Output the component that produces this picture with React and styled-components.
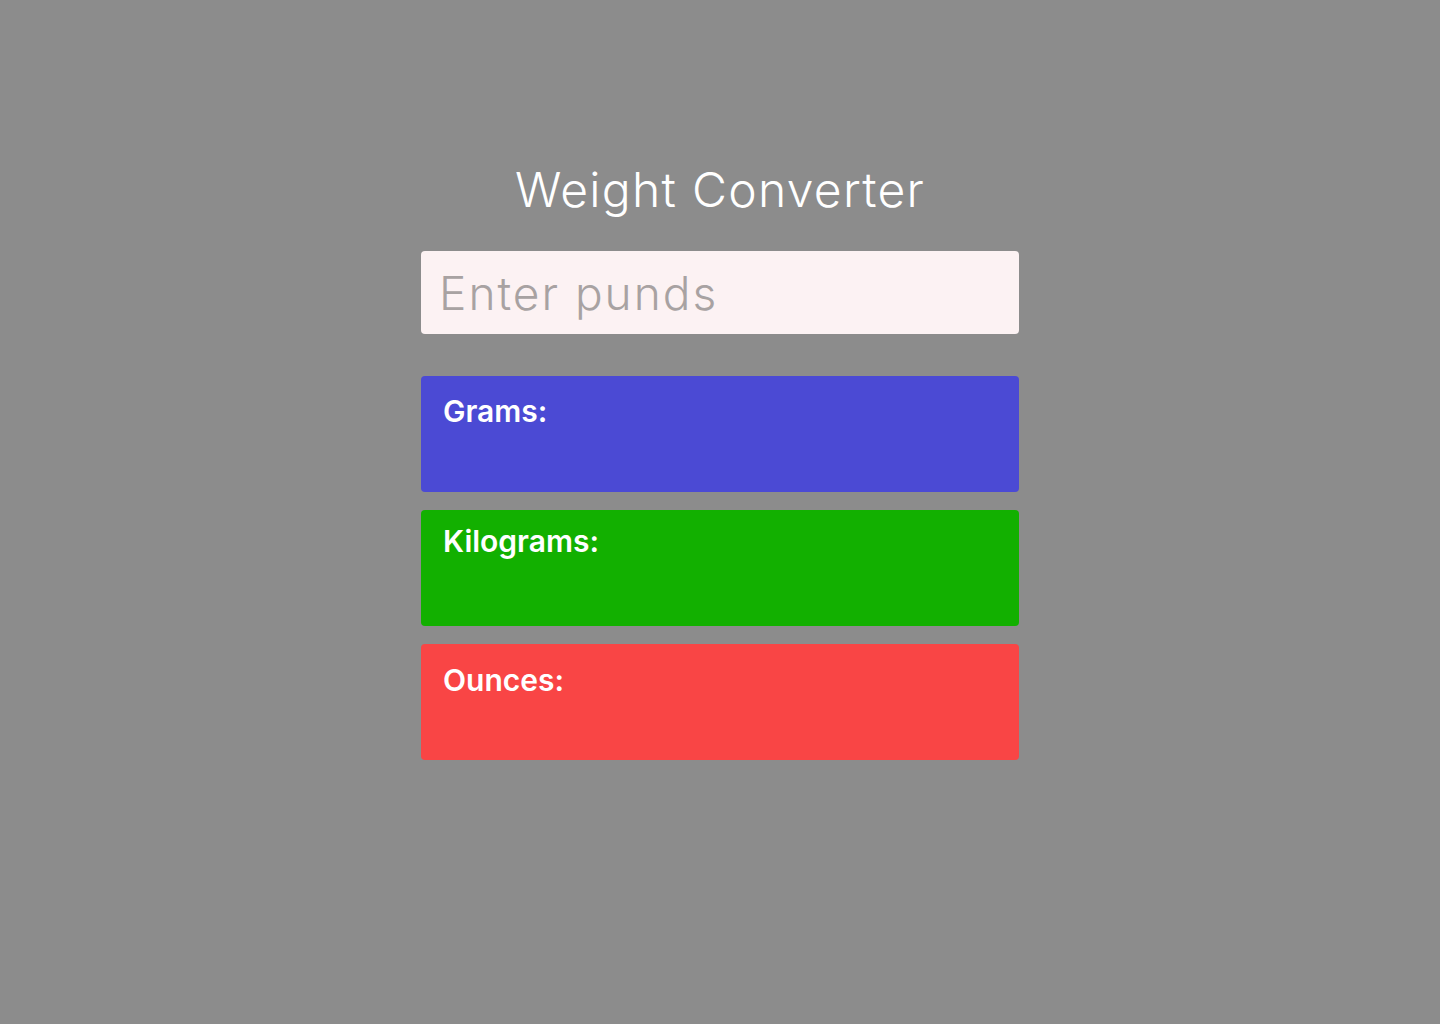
import React, { useState } from 'react'
import styled, { createGlobalStyle } from 'styled-components'

const GlobalStyle = createGlobalStyle`
  html, body {
    margin: 0;
    padding: 0;
    background: #8c8c8c;
    font-family: Inter, 'Noto Sans', sans-serif;
  }
`

const Page = styled.div`
  min-height: 1024px;
  display: flex;
  justify-content: center;
`

const Wrapper = styled.div`
  width: 598px;
  padding-top: 161px;
  display: flex;
  flex-direction: column;
  align-items: stretch;
`

const Title = styled.h1`
  margin: 0 0 32px;
  font-size: 48px;
  font-weight: 300;
  line-height: 58px;
  letter-spacing: 1.3px;
  color: #ffffff;
  text-align: center;
`

const Input = styled.input`
  box-sizing: border-box;
  width: 100%;
  height: 83px;
  margin-bottom: 42px;
  padding: 0 18px;
  border: none;
  border-radius: 4px;
  background: #fcf2f3;
  font-family: Inter, sans-serif;
  font-size: 46px;
  font-weight: 300;
  letter-spacing: 2px;
  color: #555;
  outline: none;

  &::placeholder {
    color: #a8a2a2;
  }
`

const Cards = styled.div`
  display: flex;
  flex-direction: column;
  gap: 18px;
`

const Card = styled.div`
  box-sizing: border-box;
  height: 116px;
  padding: ${props => props.$top}px 22px 0;
  border-radius: 4px;
  background: ${props => props.color};
  color: #ffffff;
`

const Label = styled.h4`
  margin: 0;
  font-size: 30px;
  font-weight: 600;
  line-height: 36px;
`

const units = [
  { name: 'Grams', color: '#4b4ad4', top: 17, factor: 453.59237 },
  { name: 'Kilograms', color: '#12b000', top: 13, factor: 0.45359237 },
  { name: 'Ounces', color: '#f94545', top: 18, factor: 16 },
]

export default function App() {
  const [pounds, setPounds] = useState('')
  const value = parseFloat(pounds)

  return (
    <Page>
      <GlobalStyle />
      <Wrapper>
        <Title>Weight Converter</Title>
        <Input
          type='number'
          placeholder='Enter punds'
          value={pounds}
          onChange={e => setPounds(e.target.value)}
        />
        <Cards>
          {units.map(unit => (
            <Card key={unit.name} color={unit.color} $top={unit.top}>
              <Label>{unit.name}:</Label>
              {!isNaN(value) && <div>{(value * unit.factor).toFixed(2)}</div>}
            </Card>
          ))}
        </Cards>
      </Wrapper>
    </Page>
  )
}
